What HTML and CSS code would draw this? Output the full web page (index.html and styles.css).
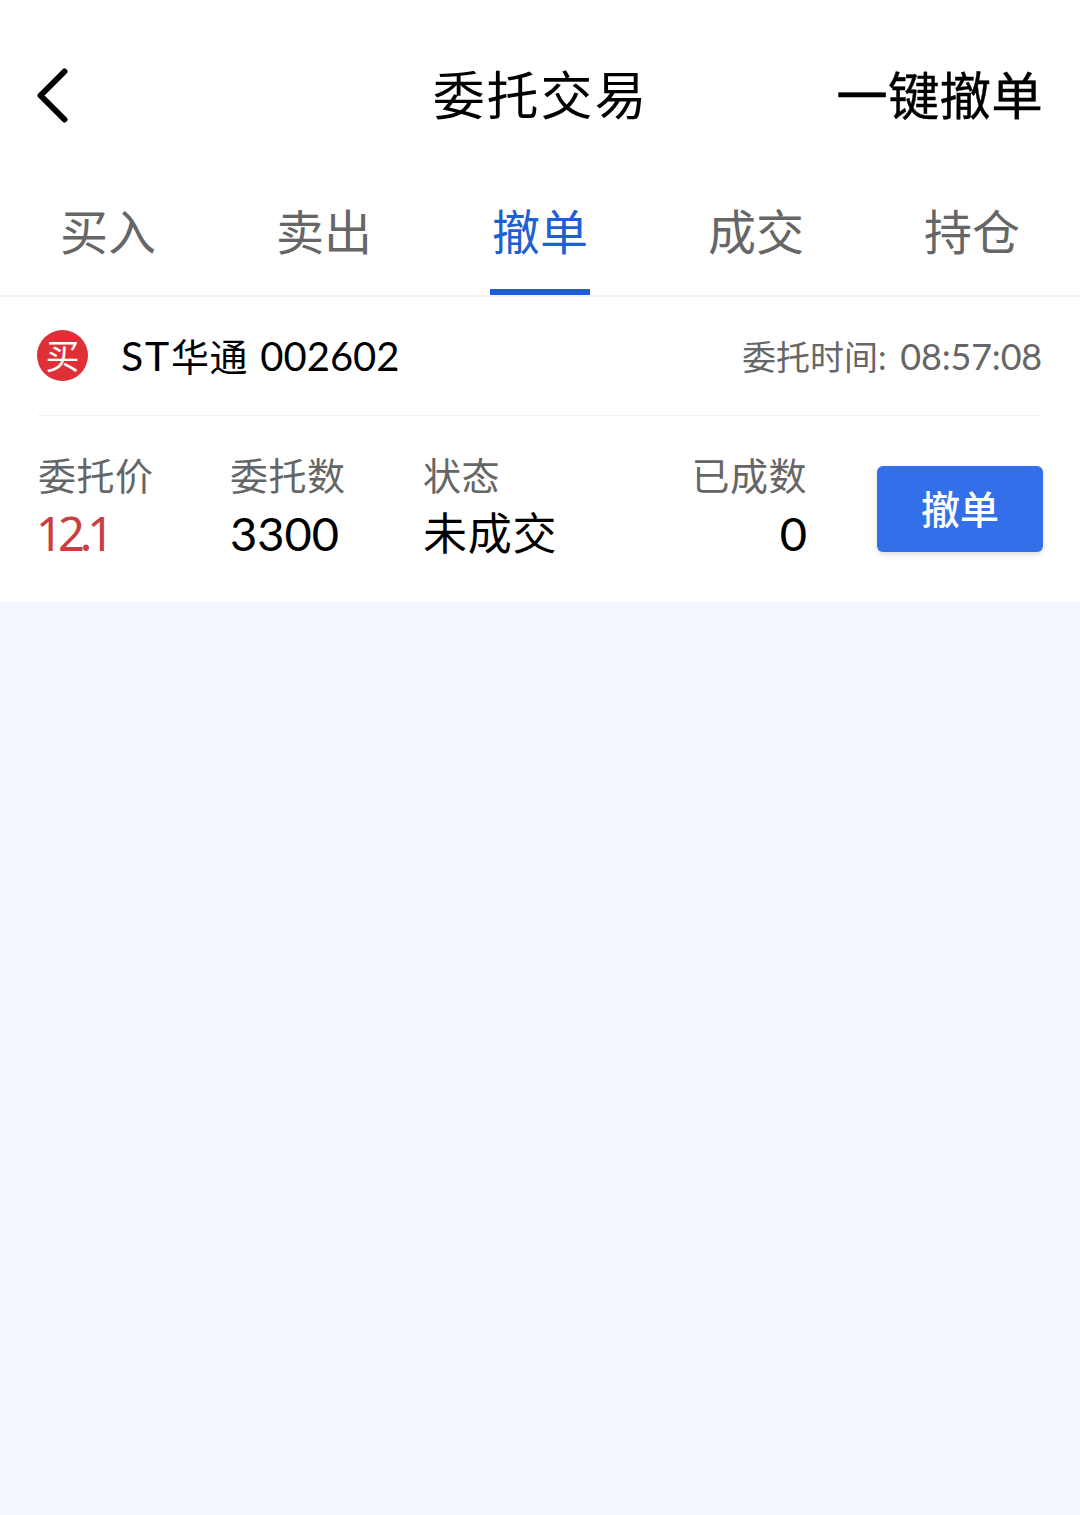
FILE: index.html
```html
<!DOCTYPE html>
<html lang="zh-CN">
<head>
  <meta charset="utf-8">
  <meta name="viewport" content="width=device-width, initial-scale=1">
  <title>委托交易</title>
  <link rel="stylesheet" href="styles.css">
</head>
<body>
  <header class="header">
    <a class="back" href="#" aria-label="返回">
      <svg width="34" height="56" viewBox="0 0 34 56" fill="none" stroke="#000" stroke-width="6" stroke-linecap="round" stroke-linejoin="round">
        <path d="M28.5 3.5 4.5 27.5 28.5 51.5"/>
      </svg>
    </a>
    <h1 class="title">委托交易</h1>
    <a class="cancel-all" href="#">一键撤单</a>
  </header>

  <nav class="tabs">
    <a class="tab" href="#">买入</a>
    <a class="tab" href="#">卖出</a>
    <a class="tab active" href="#">撤单</a>
    <a class="tab" href="#">成交</a>
    <a class="tab" href="#">持仓</a>
  </nav>

  <main class="order">
    <div class="order-head">
      <span class="badge">买</span>
      <span class="stock"><span class="prefix">ST</span>华通 <span class="code">002602</span></span>
      <span class="time">委托时间: <span class="clock">08:57:08</span></span>
    </div>
    <div class="order-body">
      <div class="cell">
        <span class="label">委托价</span>
        <span class="value price">12.1</span>
      </div>
      <div class="cell">
        <span class="label">委托数</span>
        <span class="value">3300</span>
      </div>
      <div class="cell">
        <span class="label">状态</span>
        <span class="value status">未成交</span>
      </div>
      <div class="cell right">
        <span class="label">已成数</span>
        <span class="value">0</span>
      </div>
      <button class="cancel" type="button">撤单</button>
    </div>
  </main>
</body>
</html>
```

FILE: styles.css
```css
:root {
  --blue: #1f5fd6;
  --button: #336fe8;
  --red: #c93f42;
  --badge: #df3037;
  --grey: #666;
  --line: #f2f3f4;
  --page: #f2f6fe;
  --font: Lato, "Noto Sans CJK SC", sans-serif;
}

* {box-sizing: border-box}

body {
  margin: 0;
  background: var(--page);
  color: #000;
  font-family: var(--font);
}

a {
  color: inherit;
  text-decoration: none;
}

.header {
  display: grid;
  grid-template-columns: 1fr auto 1fr;
  align-items: center;
  padding: 0 37px 0 36px;
  height: 190px;
  background: #fff;
}

.back {
  display: flex;
  padding-top: 2px;
}

.title {
  margin: 0;
  padding-left: 2px;
  font-size: 52px;
  font-weight: 400;
  line-height: 60px;
  letter-spacing: 1.9px;
}

.cancel-all {
  justify-self: end;
  font-size: 51.5px;
  line-height: 60px;
  letter-spacing: .2px;
  -webkit-text-stroke: .4px;
}

.tabs {
  display: grid;
  grid-template-columns: repeat(5, 1fr);
  height: 107px;
  background: #fff;
  border-bottom: 2px solid var(--line);
}

.tab {
  display: flex;
  flex-direction: column;
  align-items: center;
  justify-content: space-between;
  padding-top: 12px;
  color: var(--grey);
  font-size: 48px;
  line-height: 60px;
}

.tab::after {
  content: "";
  width: 100px;
  height: 6px;
}

.active {color: var(--blue)}
.active::after {background: var(--blue)}

.order {
  padding: 0 37px;
  height: 305px;
  background: #fff;
}

.order-head {
  display: flex;
  align-items: center;
  padding-bottom: 1px;
  margin-right: 2px;
  height: 119px;
  border-bottom: 1px solid var(--line);
}

.badge {
  width: 51px;
  height: 51px;
  border-radius: 50%;
  background: var(--badge);
  color: #fff;
  font-size: 34px;
  line-height: 51px;
  text-align: center;
}

.stock {
  margin-left: 33px;
  font-size: 38px;
  line-height: 50px;
  letter-spacing: .5px;
}

.prefix {
  font-size: 41px;
  letter-spacing: 1.8px;
}

.code {
  margin-left: 2px;
  font-size: 40px;
  letter-spacing: 0;
}

.time {
  margin: 2px -1px 0 auto;
  color: var(--grey);
  font-size: 34px;
  line-height: 50px;
}

.clock {
  margin-left: 5px;
  font-size: 36px;
  letter-spacing: -.2px;
}

.order-body {
  display: grid;
  grid-template-columns: 192px 193px 193px 191px 1fr;
  align-items: start;
  padding: 31px 0 0 1px;
}

.cell {
  display: flex;
  flex-direction: column;
}

.label {
  color: var(--grey);
  font-size: 38px;
  line-height: 57px;
  letter-spacing: .5px;
}

.value {
  font-size: 47px;
  line-height: 58px;
}

.status {
  font-size: 44px;
  letter-spacing: .8px;
}

.price {
  color: var(--red);
  font-family: "Noto Sans", sans-serif;
  letter-spacing: -5px;
  text-indent: -2px;
}

.right {text-align: right}

.cancel {
  justify-self: end;
  margin-top: 19px;
  padding: 0;
  width: 166px;
  height: 86px;
  border: 0;
  border-radius: 6px;
  background: var(--button);
  box-shadow: 0 3px 5px rgba(0, 0, 0, .12);
  color: #fff;
  font: 500 39px/86px var(--font);
}
```
